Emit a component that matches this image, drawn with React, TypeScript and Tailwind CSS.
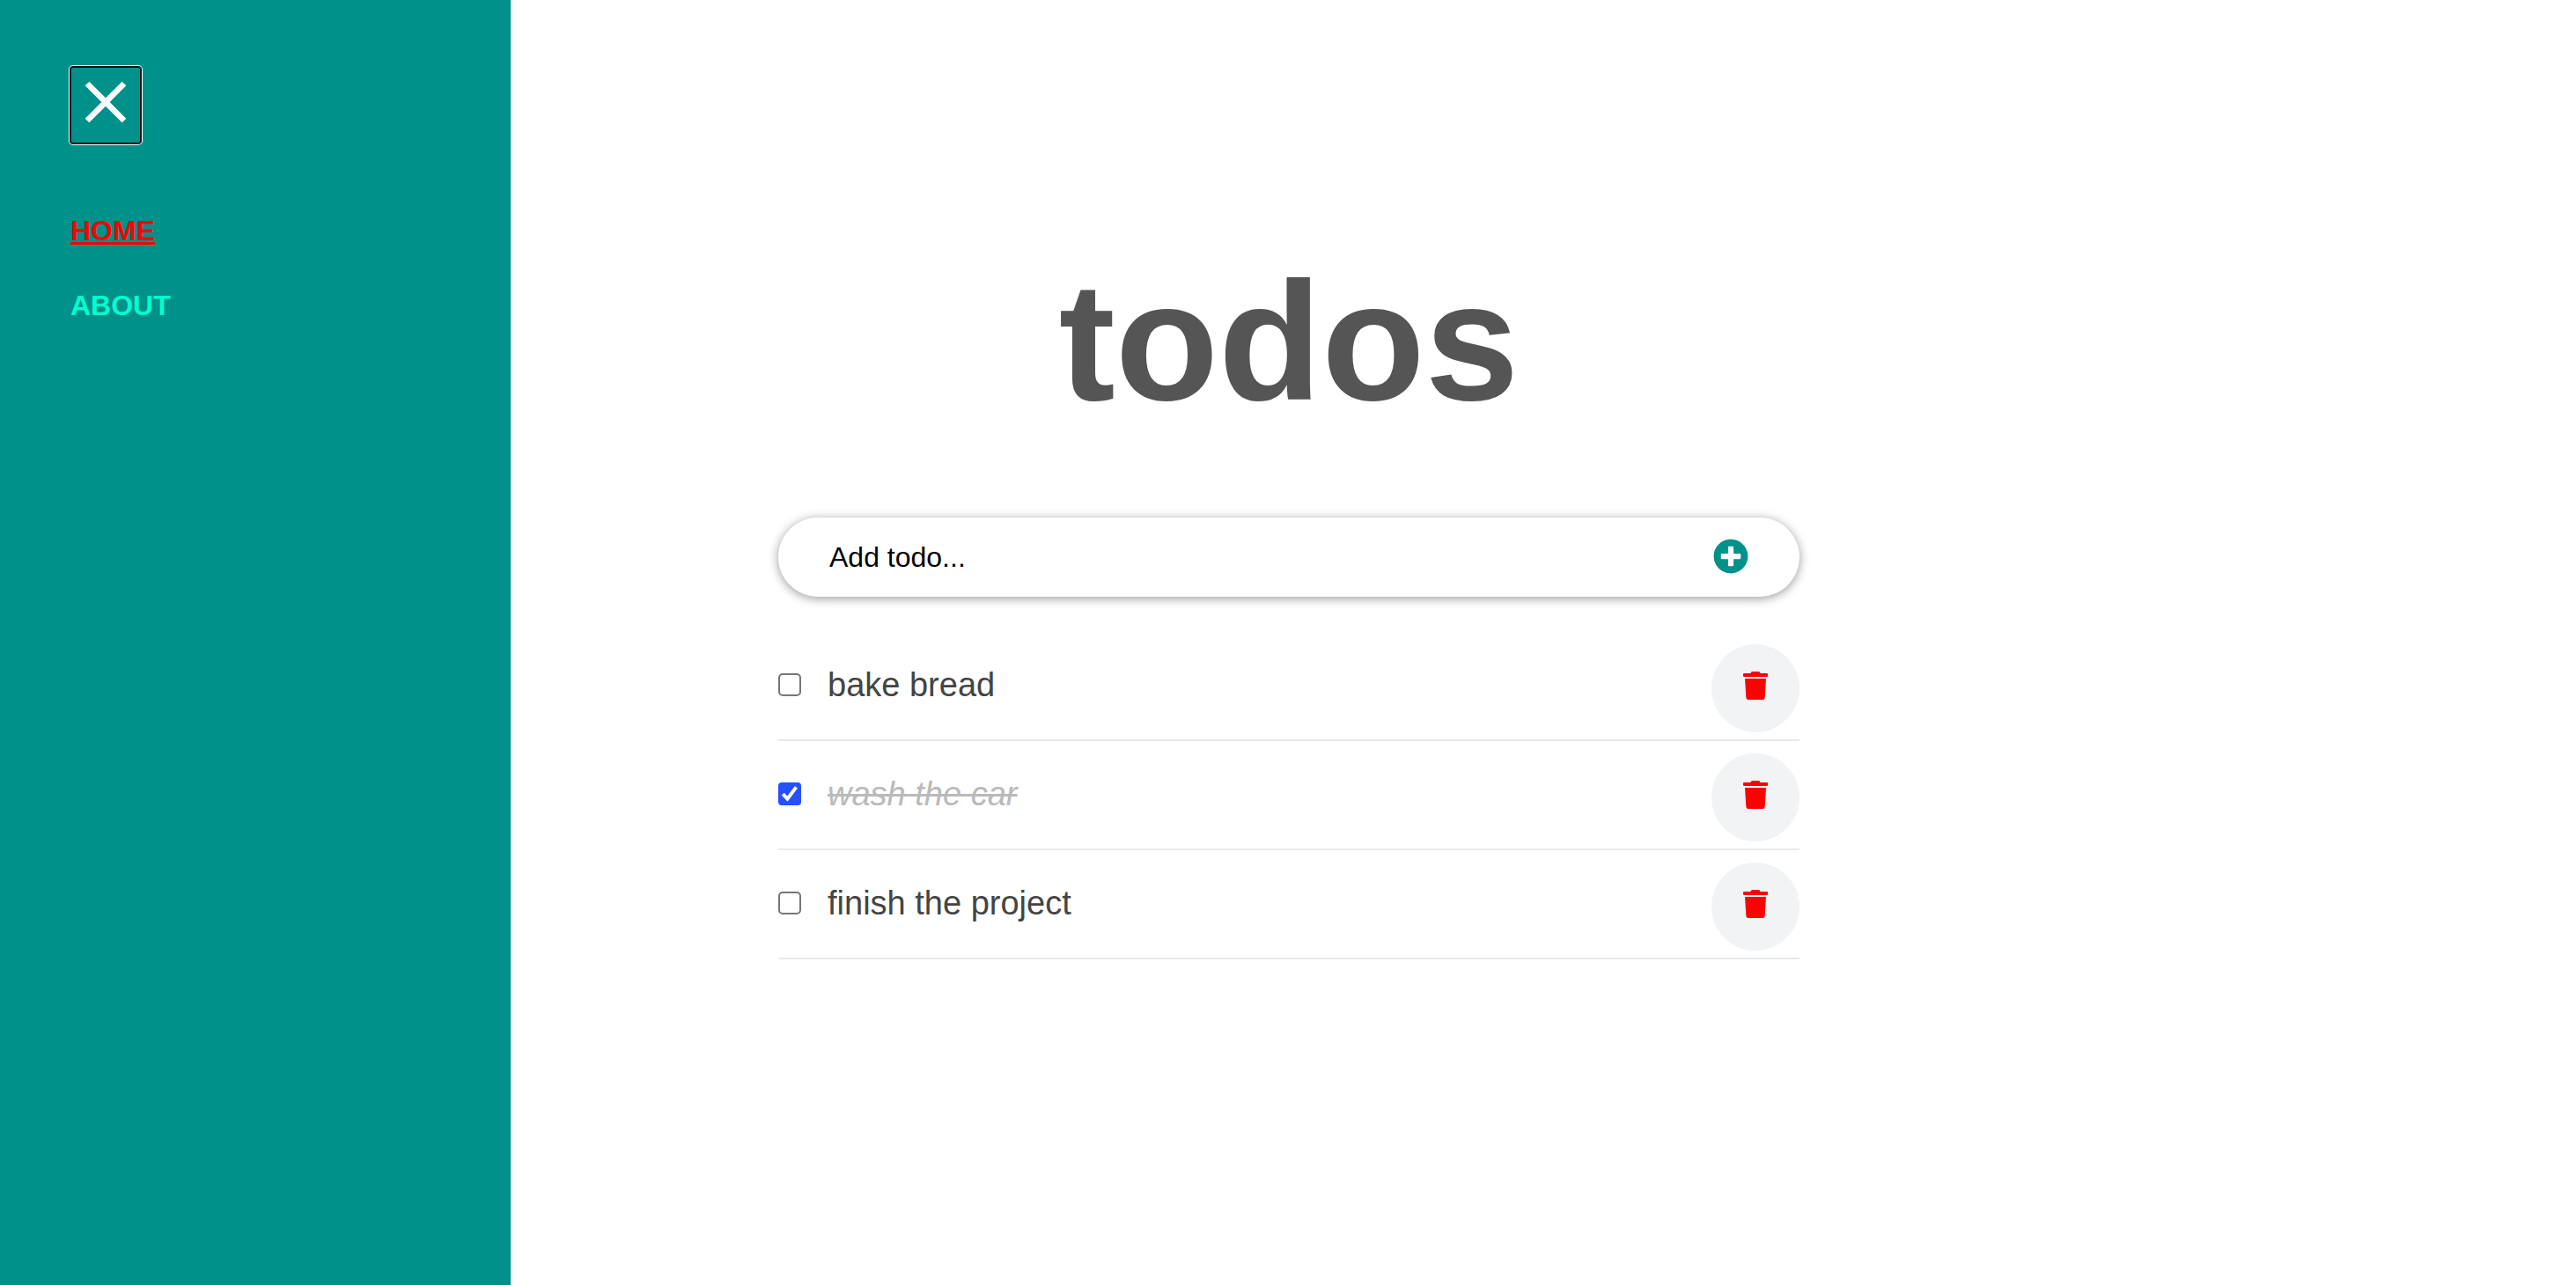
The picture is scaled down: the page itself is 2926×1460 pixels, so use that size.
import React, { useState } from "react";
import { MdClose } from "react-icons/md";
import { FaPlusCircle, FaTrash } from "react-icons/fa";

type Todo = { id: number; title: string; completed: boolean };

const initialTodos: Todo[] = [
  { id: 1, title: "bake bread", completed: false },
  { id: 2, title: "wash the car", completed: true },
  { id: 3, title: "finish the project", completed: false },
];

function Sidebar() {
  return (
    <nav className="fixed inset-y-0 left-0 w-[580px] bg-[#00918a] px-20 pt-[76px]">
      <button
        type="button"
        aria-label="Close menu"
        className="flex h-[87px] w-20 items-start rounded-[3px] text-white shadow-[inset_0_0_0_1px_#101010,0_0_0_1px_#101010,0_0_0_2px_#ffffff]"
      >
        <MdClose className="size-20" />
      </button>
      <ul className="mt-[81px] flex flex-col gap-12 text-[32px] leading-[37px] font-bold uppercase">
        <li>
          <a href="#home" className="text-[#ff0000] underline decoration-[3px]">
            Home
          </a>
        </li>
        <li>
          <a href="#about" className="text-[#00ffd0]">
            About
          </a>
        </li>
      </ul>
    </nav>
  );
}

function AddTodo() {
  const [title, setTitle] = useState("");
  return (
    <form
      className="flex h-[90px] items-center rounded-full bg-white px-[5%] shadow-[0_2px_12px_rgba(0,0,0,0.4)]"
      onSubmit={(e) => e.preventDefault()}
    >
      <input
        type="text"
        aria-label="Add todo"
        placeholder="Add todo..."
        value={title}
        onChange={(e) => setTitle(e.target.value)}
        className="min-w-0 flex-1 text-[32px] leading-[37px] text-black outline-none placeholder:text-black"
      />
      <button type="submit" aria-label="Add" className="pb-0.5 text-[#00918a]">
        <FaPlusCircle className="size-10" />
      </button>
    </form>
  );
}

function TodoItem({
  todo,
  onToggle,
  onDelete,
}: {
  todo: Todo;
  onToggle: () => void;
  onDelete: () => void;
}) {
  return (
    <li className="flex items-start justify-between border-b-2 border-[#e9e9e9] pt-3.5 pb-2">
      <label className="flex h-23 items-center gap-[30px] text-[38px] leading-[44px] text-[#444444]">
        <span className="grid size-[26px]">
          <input
            type="checkbox"
            checked={todo.completed}
            onChange={onToggle}
            className="peer col-start-1 row-start-1 size-[26px] appearance-none rounded-[5px] border-2 border-[#767676] bg-white checked:rounded-[4px] checked:border-[#264fff] checked:bg-[#264fff]"
          />
          <svg
            viewBox="0 0 26 26"
            fill="none"
            stroke="white"
            strokeWidth="4"
            className="pointer-events-none invisible col-start-1 row-start-1 size-[26px] peer-checked:visible"
          >
            <path d="M5.2 13.2 10.4 18.6 20.4 5.4" />
          </svg>
        </span>
        <span className={todo.completed ? "text-[#bababa] italic line-through decoration-[3px]" : ""}>
          {todo.title}
        </span>
      </label>
      <button
        type="button"
        aria-label={`Delete ${todo.title}`}
        onClick={onDelete}
        className="flex size-25 items-center justify-center rounded-full bg-[#f1f3f5] pb-[7px] text-[#ff0000]"
      >
        <FaTrash className="size-8" />
      </button>
    </li>
  );
}

export default function App() {
  const [todos, setTodos] = useState(initialTodos);
  return (
    <div className="min-h-screen bg-white pl-0.5 font-['Liberation_Sans',Arial,sans-serif]">
      <Sidebar />
      <main className="mx-auto max-w-[1160px] pt-[278px]">
        <h1 className="text-center text-[192px] leading-[220px] font-bold text-[#555555]">todos</h1>
        <div className="mt-[90px]">
          <AddTodo />
        </div>
        <ul className="mt-10">
          {todos.map((todo) => (
            <TodoItem
              key={todo.id}
              todo={todo}
              onToggle={() =>
                setTodos(todos.map((t) => (t.id === todo.id ? { ...t, completed: !t.completed } : t)))
              }
              onDelete={() => setTodos(todos.filter((t) => t.id !== todo.id))}
            />
          ))}
        </ul>
      </main>
    </div>
  );
}
